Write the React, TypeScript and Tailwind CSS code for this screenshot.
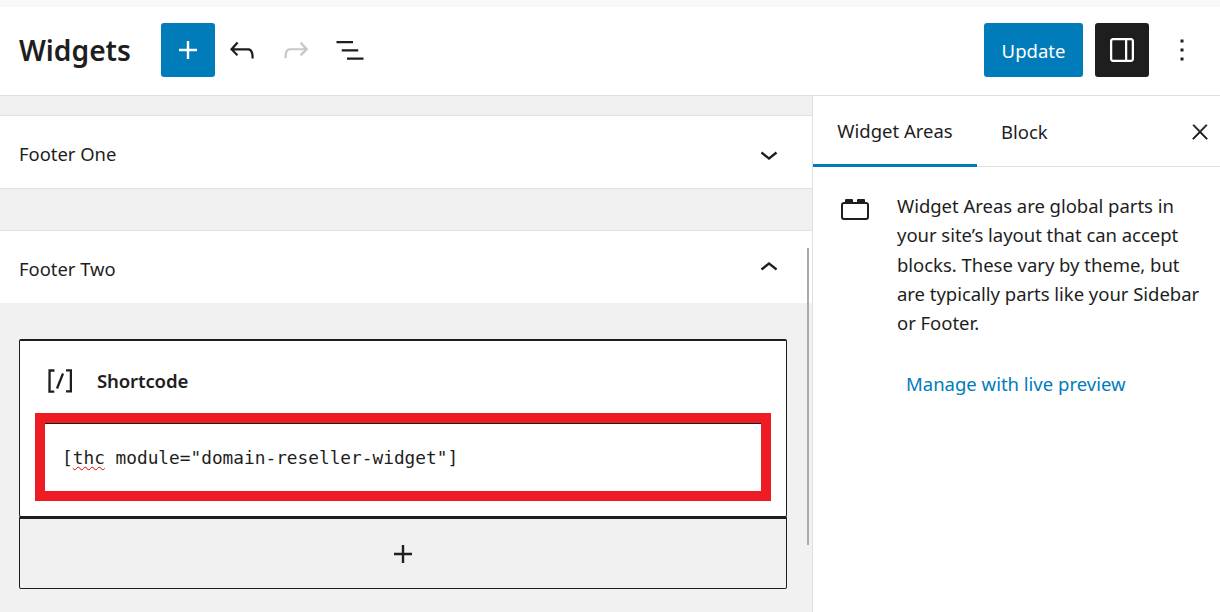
import React from 'react';

const UI_FONT = 'font-["Noto_Sans",sans-serif]';

// ─── Icons ────────────────────────────────────────────────────────────────────

const Icon: React.FC<{ d: string; size?: number; className?: string; stroke?: number }> = ({ d, size = 36, className, stroke }) => (
  <svg width={size} height={size} viewBox="0 0 24 24" fill="currentColor" stroke={stroke ? 'currentColor' : undefined} strokeWidth={stroke} className={className}>
    <path d={d} />
  </svg>
);

const PLUS = 'M18 11.2h-5.2V6h-1.6v5.2H6v1.6h5.2V18h1.6v-5.2H18z';
const UNDO = 'M18.3 11.7c-.6-.6-1.4-.9-2.3-.9H6.7l2.9-3.3-1.1-1-4.5 5L8.5 16l1-1-2.7-2.7H16c.5 0 .9.2 1.3.5 1 1 1 3.4 1 4.5v.3h1.5v-.2c0-1.5 0-4.3-1.5-5.7z';
const REDO = 'M15.6 6.5l-1.1 1 2.9 3.3H8c-.9 0-1.7.3-2.3.9-1.4 1.5-1.4 4.2-1.4 5.6v.2h1.5v-.3c0-1.1 0-3.5 1-4.5.3-.3.7-.5 1.3-.5h9.2L14.5 15l1.1 1.1 4.6-4.6-4.6-5z';
const LIST_VIEW = 'M3 6h11v1.5H3V6Zm3.5 5.5h11V13h-11v-1.5ZM21 17H10v1.5h11V17Z';
const DRAWER = 'M18 4H6c-1.1 0-2 .9-2 2v12c0 1.1.9 2 2 2h12c1.1 0 2-.9 2-2V6c0-1.1-.9-2-2-2zm-4 14.5H6c-.3 0-.5-.2-.5-.5V6c0-.3.2-.5.5-.5h8v13zm4.5-.5c0 .3-.2.5-.5.5h-2.5v-13H18c.3 0 .5.2.5.5v12z';
const MORE = 'M13 19h-2v-2h2v2zm0-6h-2v-2h2v2zm0-6h-2V5h2v2z';
const CLOSE = 'M13 11.8l6.1-6.3-1-1-6.1 6.2-6.1-6.2-1 1 6.1 6.3-6.5 6.7 1 1 6.5-6.6 6.5 6.6 1-1z';
const CHEVRON_DOWN = 'M17.5 11.6L12 16l-5.5-4.4.9-1.2L12 14l4.5-3.6 1 1.2z';
const CHEVRON_UP = 'M6.5 12.4L12 8l5.5 4.4-.9 1.2L12 10l-4.5 3.6-1-1.2z';
const SHORTCODE = 'M16 4.2v1.5h2.5v12.5H16v1.5h4V4.2h-4zM4.2 19.8h4v-1.5H5.8V5.8h2.5V4.2h-4l-.1 15.6zm5.1-3.1l1.4.6 4-10-1.4-.6-4 10z';

const AreaIcon = () => (
  <svg width="28" height="21" viewBox="0 0 28 21" fill="none" className="shrink-0 mt-[8px]">
    <rect x="1" y="4" width="26" height="16" rx="2" stroke="#1e1e1e" strokeWidth="2" />
    <rect x="4" y="0" width="8" height="4" rx="1" fill="#1e1e1e" />
    <rect x="16" y="0" width="8" height="4" rx="1" fill="#1e1e1e" />
  </svg>
);

// ─── Component ───────────────────────────────────────────────────────────────

const App: React.FC = () => {
  return (
    <div className={`w-[1220px] h-[612px] overflow-hidden flex flex-col bg-white text-[#1e1e1e] ${UI_FONT}`}>
      <div className="h-[7px] shrink-0 bg-[#f9f9f9]" />

      {/* Header */}
      <header className="h-[89px] shrink-0 flex items-center bg-white border-b border-[#e0e0e0] pl-[19px] pr-[20px] pb-[3px]">
        <h1 className="w-[142px] text-[28.2px] font-semibold leading-none pt-[1px]">Widgets</h1>
        <button className="w-[54px] h-[54px] rounded-[3px] bg-[#007cba] text-white flex items-center justify-center">
          <Icon d={PLUS} />
        </button>
        <Icon d={UNDO} className="ml-[9px]" />
        <Icon d={REDO} className="ml-[18px] text-[#c8c8c8]" />
        <Icon d={LIST_VIEW} className="ml-[18px]" />
        <div className="flex-1" />
        <button className="w-[99px] h-[54px] rounded-[3px] bg-[#007cba] text-white text-[18.5px] pt-[2px]">Update</button>
        <button className="ml-[12px] w-[54px] h-[54px] rounded-[3px] bg-[#1e1e1e] text-white flex items-center justify-center">
          <Icon d={DRAWER} />
        </button>
        <Icon d={MORE} className="ml-[15px]" />
      </header>

      <div className="flex-1 flex min-h-0">
        {/* Widget areas */}
        <main className="relative w-[812px] shrink-0 bg-[#f0f0f0] pt-[19px] overflow-hidden">
          <div className="h-[74px] flex items-center justify-between bg-white border-y border-[#e0e0e0] pl-[19px] pr-[25px] pt-[3px] text-[18.4px]">
            <span>Footer One</span>
            <Icon d={CHEVRON_DOWN} />
          </div>

          <div className="mt-[41px] h-[73px] flex items-center justify-between bg-white border-t border-[#e0e0e0] pl-[19px] pr-[25px] pt-[2px] text-[18.4px]">
            <span className="pt-[2px]">Footer Two</span>
            <Icon d={CHEVRON_UP} />
          </div>

          <div className="h-full bg-[#f1f1f1] pt-[36px] pl-[19px] pr-[25px]">
            <section className="h-[178px] bg-white border border-t-2 border-[#1e1e1e] rounded-[2px] px-[15px] flex flex-col">
              <div className="h-[72px] flex items-center pl-[7px] pt-[8px] gap-[19px]">
                <Icon d={SHORTCODE} />
                <span className="text-[18.6px] font-semibold tracking-[-0.15px]">Shortcode</span>
              </div>
              <div className="h-[88px] border-[10px] border-[#ed1c24] bg-white">
                <div className="h-full border-t border-[#1e1e1e] pl-[17px] pt-[1px] flex items-center font-['DejaVu_Sans_Mono',monospace] text-[17.8px]">
                  <span>
                    [<span className="underline decoration-wavy decoration-[#e00000] decoration-1 underline-offset-2">thc</span> module="domain-reseller-widget"]
                  </span>
                </div>
              </div>
            </section>
            <div className="h-[73px] -mt-px border border-t-[3px] border-[#1e1e1e] rounded-[2px] flex items-center justify-center">
              <Icon d={PLUS} />
            </div>
          </div>

          {/* Scrollbar thumb */}
          <div className="absolute left-[807px] top-[152px] w-[2px] h-[297px] bg-[#aaaaaa]" />
        </main>

        {/* Sidebar */}
        <aside className="flex-1 border-l border-[#e0e0e0] bg-white">
          <div className="relative h-[71px] flex border-b border-[#e0e0e0] text-[18.5px]">
            <div className="w-[164px] h-[71px] flex items-center justify-center pt-[1px] border-b-[3px] border-[#007cba]">Widget Areas</div>
            <div className="ml-[24px] h-[71px] flex items-center">Block</div>
            <Icon d={CLOSE} size={24} stroke={0.6} className="absolute right-[8px] top-[24px]" />
          </div>
          <div className="flex pl-[28px] pt-[24px]">
            <AreaIcon />
            <div className="ml-[28px] w-[306px]">
              <p className="text-[18.5px] leading-[29.3px] tracking-[-0.03px]">
                Widget Areas are global parts in your site’s layout that can accept blocks. These vary by theme, but are typically parts like your Sidebar or Footer.
              </p>
              <p className="mt-[33px] ml-[9px] text-[18.5px] text-[#007cba]">Manage with live preview</p>
            </div>
          </div>
        </aside>
      </div>
    </div>
  );
};

export default App;
